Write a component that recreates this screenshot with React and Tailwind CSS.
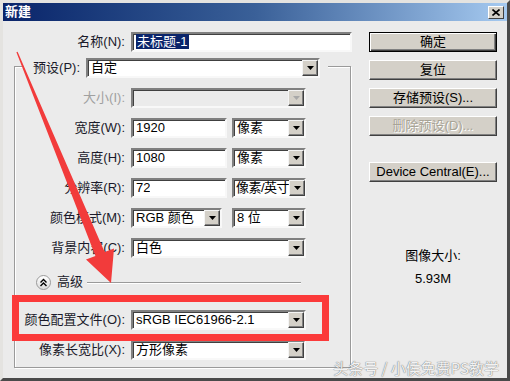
import React from "react";

const FONT = "font-['Liberation_Sans','Noto_Sans_CJK_SC',sans-serif]";

function DropBtn({ disabled }) {
  return (
    <div className="ml-auto w-[16px] h-[16px] shrink-0 bg-[#d4d0c8] border border-t-[#f4f4f4] border-l-[#f4f4f4] border-b-[#404040] border-r-[#404040] shadow-[inset_-1px_-1px_0_#808080] flex items-center justify-center">
      <svg width="7" height="4" viewBox="0 0 7 4">
        <path d="M0 0h7L3.5 4z" fill={disabled ? "#a8a8a8" : "#000"} />
      </svg>
    </div>
  );
}

function Field({ w, children, disabled, combo, tight }) {
  return (
    <div
      className={
        "h-[20px] shrink-0 flex items-center border-2 border-t-[#808080] border-l-[#808080] border-b-[#f8f8f8] border-r-[#f8f8f8] shadow-[inset_1px_1px_0_#404040] text-[13px] leading-[16px] text-black " +
        (disabled ? "bg-[#ebebeb] " : "bg-white ") +
        w
      }
    >
      <div className={tight ? "pl-[2px] whitespace-nowrap tracking-[-0.5px]" : "pl-[3px] whitespace-nowrap overflow-hidden"}>{children}</div>
      {combo && <DropBtn disabled={disabled} />}
    </div>
  );
}

function Btn({ children, def, disabled }) {
  const edge = def
    ? "border border-black shadow-[inset_1px_1px_0_#fff,inset_-1px_-1px_0_#404040,inset_-2px_-2px_0_#808080]"
    : "border border-t-white border-l-white border-b-[#404040] border-r-[#404040] shadow-[inset_-1px_-1px_0_#808080]";
  return (
    <div
      className={
        "h-[20px] w-[128px] flex items-center justify-center bg-[#d4d0c8] text-[13px] leading-[16px] " +
        edge +
        (disabled ? " text-[#a8a496] [text-shadow:1px_1px_0_#fff]" : " text-black")
      }
    >
      {children}
    </div>
  );
}

function Row({ label, dim, children }) {
  return (
    <div className="flex items-center h-[20px]">
      <div className={"w-[110px] text-right text-[13px] leading-[20px] whitespace-nowrap " + (dim ? "text-[#a0a0a0]" : "text-[#1a1a2a]")}>
        {label}
      </div>
      <div className="ml-[6px] flex items-center">{children}</div>
    </div>
  );
}

export default function App() {
  return (
    <div className={"relative w-[510px] h-[381px] overflow-hidden bg-[#d4d0c8] border-t-[3px] border-l-[3px] border-t-[#e4e3e0] border-l-[#e4e3e0] border-r-[3px] border-b-[3px] border-r-[#4a4a4a] border-b-[#4a4a4a] " + FONT}>
      {/* title bar */}
      <div className="h-[18px] flex items-center bg-linear-to-r from-[#0a246a] via-[#3a6098] to-[#a6caf0] pl-[2px] pr-[3px]">
        <span className="text-white font-bold text-[13px] leading-[18px]">新建</span>
        <div className="ml-auto w-[16px] h-[13px] bg-[#d4d0c8] border border-t-white border-l-white border-b-[#404040] border-r-[#404040] flex items-center justify-center">
          <svg width="8" height="7" viewBox="0 0 8 7">
            <path d="M0.5 0.5L7.5 6.5M7.5 0.5L0.5 6.5" stroke="#000" strokeWidth="1.6" />
          </svg>
        </div>
      </div>

      {/* body */}
      <div className="h-[357px] bg-[#ebebeb] flex pt-[11px]">
        {/* left column */}
        <div className="pl-[11px] w-[349px] flex flex-col">
          <div className="flex items-center h-[20px]">
            <div className="w-[111px] text-right text-[13px] leading-[20px] text-[#1a1a2a]">名称(N):</div>
            <div className="ml-[6px]">
              <Field w="w-[221px]">
                <span className="bg-[#0a246a] text-white px-[1px]">未标题-1</span>
              </Field>
            </div>
          </div>

          {/* group frame */}
          <div className="mt-[14px] w-[337px] border border-[#9a9a9a] shadow-[inset_1px_1px_0_#fff,1px_1px_0_#fff] flex flex-col pb-[7px]">
            <div className="-mt-[9px] ml-[8px] self-start h-[20px] flex items-center bg-[#ebebeb] pr-[8px]">
              <div className="w-[57px] text-right text-[13px] leading-[20px] text-[#1a1a2a]">预设(P):</div>
              <div className="ml-[6px]">
                <Field w="w-[234px]" combo>
                  自定
                </Field>
              </div>
            </div>

            <div className="mt-[10px] flex flex-col gap-[10px]">
              <Row label="大小(I):" dim>
                <Field w="w-[175px]" combo disabled />
              </Row>
              <Row label="宽度(W):">
                <Field w="w-[96px]">1920</Field>
                <div className="ml-[5px]">
                  <Field w="w-[74px]" combo>像素</Field>
                </div>
              </Row>
              <Row label="高度(H):">
                <Field w="w-[96px]">1080</Field>
                <div className="ml-[5px]">
                  <Field w="w-[74px]" combo>像素</Field>
                </div>
              </Row>
              <Row label="分辨率(R):">
                <Field w="w-[96px]">72</Field>
                <div className="ml-[5px]">
                  <Field w="w-[74px]" combo tight>像素/英寸</Field>
                </div>
              </Row>
              <Row label="颜色模式(M):">
                <Field w="w-[91px]" combo>RGB 颜色</Field>
                <div className="ml-[10px]">
                  <Field w="w-[74px]" combo>8 位</Field>
                </div>
              </Row>
              <Row label="背景内容(C):">
                <Field w="w-[175px]" combo>白色</Field>
              </Row>
            </div>

            {/* advanced */}
            <div className="mt-[14px] h-[20px] flex items-center">
              <div className="ml-[21px] w-[15px] h-[15px] rounded-full border border-[#9a9a9a] bg-linear-to-b from-white to-[#dcdcdc] flex items-center justify-center">
                <svg width="9" height="9" viewBox="0 0 9 9">
                  <path d="M1.5 4.5L4.5 1.5L7.5 4.5M1.5 8L4.5 5L7.5 8" fill="none" stroke="#000" strokeWidth="1.4" />
                </svg>
              </div>
              <span className="ml-[6px] text-[13px] leading-[20px] text-[#1a1a2a]">高级</span>
              <div className="ml-[4px] w-[214px] h-px bg-[#9a9a9a] shadow-[0_1px_0_#fff]" />
            </div>

            <div className="mt-[18px] flex flex-col gap-[10px]">
              <Row label="颜色配置文件(O):">
                <Field w="w-[175px]" combo>sRGB IEC61966-2.1</Field>
              </Row>
              <Row label="像素长宽比(X):">
                <Field w="w-[175px]" combo>方形像素</Field>
              </Row>
            </div>
          </div>
        </div>

        {/* right column */}
        <div className="ml-[17px] flex flex-col">
          <Btn def>确定</Btn>
          <div className="mt-[8px]"><Btn>复位</Btn></div>
          <div className="mt-[8px]"><Btn>存储预设(S)...</Btn></div>
          <div className="mt-[8px]"><Btn disabled>删除预设(D)...</Btn></div>
          <div className="mt-[26px]"><Btn>Device Central(E)...</Btn></div>
          <div className="mt-[67px] text-center text-[13px] leading-[14px] text-black">图像大小:</div>
          <div className="mt-[9px] text-center text-[13px] leading-[14px] text-black">5.93M</div>
        </div>
      </div>

      {/* annotation: red box */}
      <div className="absolute left-[9px] top-[292px] w-[317px] h-[46px] border-[7px] border-[#fb3a3a] pointer-events-none" />

      {/* annotation: red arrow */}
      <svg className="absolute -left-[3px] -top-[3px] pointer-events-none" width="510" height="381" viewBox="0 0 510 381">
        <polygon
          points="17.6,51.8 104.6,252.1 114,248.4 111,283 86,259.6 95.4,255.9 16.4,52.2"
          fill="#f23b3b"
        />
      </svg>

      {/* watermark */}
      <div className="absolute right-[8px] bottom-[1px] text-[15px] leading-[18px] text-white/90 [text-shadow:0_0_1px_#777,0_0_1px_#777] pointer-events-none font-['Noto_Sans_CJK_SC',sans-serif]">
        头条号 / 小侯免费PS教学
      </div>
    </div>
  );
}
